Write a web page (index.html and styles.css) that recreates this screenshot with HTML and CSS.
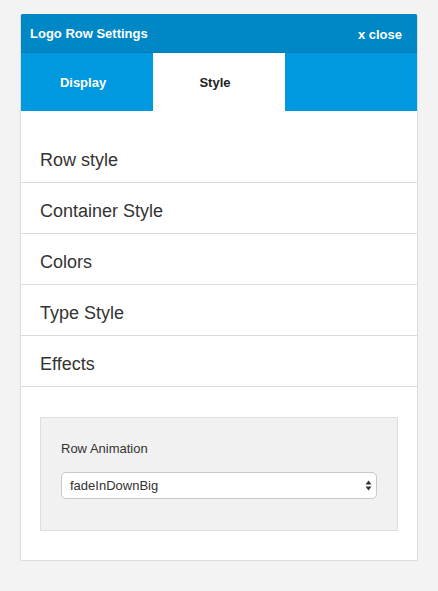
FILE: index.html
```html
<!DOCTYPE html>
<html>
<head>
<meta charset="utf-8">
<link rel="stylesheet" href="styles.css">
</head>
<body>
<div class="panel">
  <div class="header">
    <span class="title">Logo Row Settings</span>
    <span class="close">x close</span>
  </div>
  <div class="tabs">
    <div class="tab">Display</div>
    <div class="tab active">Style</div>
    <div class="tab"></div>
  </div>
  <div class="content">
    <ul class="menu">
      <li>Row style</li>
      <li>Container Style</li>
      <li>Colors</li>
      <li>Type Style</li>
      <li>Effects</li>
    </ul>
    <div class="fieldbox">
      <div class="label">Row Animation</div>
      <div class="select">
        <span>fadeInDownBig</span>
        <svg class="arrows" width="7" height="11" viewBox="0 0 7 11"><path d="M3.5 0.5 L6.5 4.5 L0.5 4.5 Z M0.5 6.5 L6.5 6.5 L3.5 10.5 Z" fill="#333"/></svg>
      </div>
    </div>
  </div>
</div>
</body>
</html>
```
FILE: styles.css
```css
html, body {
  margin: 0;
  padding: 0;
  background: #f3f3f3;
  font-family: "Liberation Sans", Arial, sans-serif;
}
body {
  padding: 14px 20px 30px 20px;
}
.panel {
  width: 398px;
  box-sizing: border-box;
  background: #fff;
  border: 1px solid #dcdcdc;
  border-top: none;
  border-radius: 2px;
  overflow: hidden;
}
.header {
  height: 39px;
  background: #0088c6;
  color: #fff;
  display: flex;
  align-items: center;
  justify-content: space-between;
  padding: 0 15px 0 9px;
  font-weight: bold;
  font-size: 13px;
  border-bottom: 1px solid #0080bb;
  box-sizing: border-box;
}
.header .close {
  font-size: 13px;
  padding-top: 2px;
}
.tabs {
  display: flex;
  height: 58px;
  background: #0099e0;
}
.tab {
  flex: 1;
  display: flex;
  align-items: center;
  justify-content: center;
  color: #fff;
  font-weight: bold;
  font-size: 13px;
  padding: 1px 8px 0 0;
}
.tab.active {
  background: #fff;
  color: #222;
}
.content {
  padding: 21px 0 29px 0;
}
.menu {
  list-style: none;
  margin: 0;
  padding: 0;
}
.menu li {
  border-bottom: 1px solid #dcdcdc;
  display: flex;
  align-items: center;
  padding: 6px 19px 0 19px;
  height: 44px;
  font-size: 18px;
  color: #333;
}
.fieldbox {
  margin: 30px 19px 0 19px;
  background: #f1f1f1;
  border: 1px solid #dedede;
  padding: 23px 20px 31px 20px;
}
.label {
  font-size: 13px;
  color: #333;
  margin-bottom: 16px;
}
.select {
  height: 27px;
  box-sizing: border-box;
  background: #fff;
  border: 1px solid #c9c9c9;
  border-radius: 5px;
  display: flex;
  align-items: center;
  justify-content: space-between;
  padding: 0 4px 0 8px;
  font-size: 13px;
  color: #333;
}
.arrows {
  display: block;
}
```
